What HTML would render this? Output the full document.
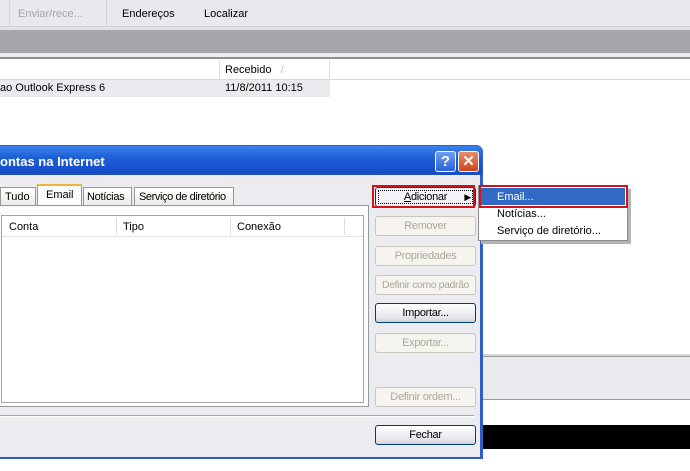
<!DOCTYPE html>
<html><head><style>
*{margin:0;padding:0;box-sizing:border-box}
body{width:690px;height:471px;position:relative;overflow:hidden;background:#fff;font-family:"Liberation Sans",Tahoma,sans-serif;font-size:11px;color:#000}
.a{position:absolute;white-space:nowrap}
.btn{position:absolute;white-space:nowrap;left:375px;width:101px;height:20px;border:1px solid #c9c7ba;border-radius:3px;background:#f5f4ef;color:#aca899;text-align:center;line-height:18px;font-size:11px;letter-spacing:-0.3px}
.btn.on{border:1px solid #003c74;background:linear-gradient(#fff,#e4e3ea 80%,#cfcfd8);color:#000}
</style></head><body>
<div class="a" style="left:0;top:0;width:690px;height:26px;background:#e9e8ec"></div>
<div class="a" style="left:9px;top:0;width:1px;height:26px;background:#d4d3d8"></div>
<div class="a" style="left:106px;top:0;width:1px;height:26px;background:#d4d3d8"></div>
<div class="a" style="left:18px;top:8px;color:#a6a6a6">Enviar/rece...</div>
<div class="a" style="left:122px;top:8px">Endereços</div>
<div class="a" style="left:204px;top:8px">Localizar</div>
<div class="a" style="left:0;top:26px;width:690px;height:4px;background:#e2e1e6;border-top:1px solid #cfced3"></div>
<div class="a" style="left:0;top:30px;width:690px;height:23px;background:#a7a6ab"></div>
<div class="a" style="left:0;top:53px;width:690px;height:5px;background:#ecebef"></div>
<div class="a" style="left:0;top:57px;width:690px;height:2px;background:#8f8e93"></div>
<div class="a" style="left:0;top:79px;width:690px;height:1px;background:#d8d8d8"></div>
<div class="a" style="left:219px;top:60px;width:1px;height:19px;background:#ddd"></div>
<div class="a" style="left:329px;top:60px;width:1px;height:19px;background:#ddd"></div>
<div class="a" style="left:225px;top:64px">Recebido &nbsp;&nbsp;<span style="color:#bbb">/</span></div>
<div class="a" style="left:0;top:80px;width:330px;height:17px;background:#ebeaee"></div>
<div class="a" style="left:0;top:82px">ao Outlook Express 6</div>
<div class="a" style="left:225px;top:82px">11/8/2011 10:15</div>
<div class="a" style="left:480px;top:354px;width:210px;height:2px;background:#d6d5da"></div>
<div class="a" style="left:480px;top:356px;width:210px;height:44px;background:#ebeaee;border-top:1px solid #9a999e;border-bottom:1px solid #9a999e"></div>
<div class="a" style="left:480px;top:425px;width:210px;height:24px;background:#000"></div>
<div class="a" style="left:0;top:145px;width:483px;height:314px;background:#2f5fc6;border-radius:0 7px 0 0"></div>
<div class="a" style="left:0;top:146px;width:482px;height:29px;background:linear-gradient(#3a82ee,#1f5fd6 40%,#1550cc 80%,#1a4fba);border-radius:0 6px 0 0"></div>
<div class="a" style="left:0;top:154px;color:#fff;font-weight:bold;font-size:13px">ontas na Internet</div>
<div class="a" style="left:435px;top:151px;width:21px;height:21px;border:1px solid #fff;border-radius:3px;background:linear-gradient(#6e9df5,#2b62db);color:#fff;font-weight:bold;font-size:15px;text-align:center;line-height:19px">?</div>
<div class="a" style="left:458px;top:151px;width:21px;height:21px;border:1px solid #fff;border-radius:3px;background:linear-gradient(#e98c6d,#c9471e);color:#fff;font-weight:bold;font-size:15px;text-align:center;line-height:19px">✕</div>
<div class="a" style="left:0;top:175px;width:480px;height:282px;background:#ecebef"></div>
<div class="a" style="left:0;top:187px;width:36px;height:18px;border:1px solid #919b9c;border-bottom:none;background:linear-gradient(#fff,#ecebe6);padding:3px 0 0 4px">Tudo</div>
<div class="a" style="left:37px;top:184px;width:45px;height:22px;border:1px solid #919b9c;border-top:2px solid #f2b33a;border-bottom:none;background:#fcfcfe;padding:3px 0 0 8px">Email</div>
<div class="a" style="left:83px;top:187px;width:49px;height:18px;border:1px solid #919b9c;border-bottom:none;background:linear-gradient(#fff,#ecebe6);padding:3px 0 0 3px;letter-spacing:-0.3px">Notícias</div>
<div class="a" style="left:134px;top:187px;width:100px;height:18px;border:1px solid #919b9c;border-bottom:none;background:linear-gradient(#fff,#ecebe6);padding:3px 0 0 4px;letter-spacing:-0.4px">Serviço de diretório</div>
<div class="a" style="left:0;top:205px;width:369px;height:202px;border:1px solid #919b9c;border-left:none;background:#fcfcfe"></div>
<div class="a" style="left:1px;top:215px;width:363px;height:188px;border:1px solid #a5a5a5;background:#fff"></div>
<div class="a" style="left:2px;top:216px;width:361px;height:21px;border-bottom:1px solid #e3e2e8"></div>
<div class="a" style="left:116px;top:218px;width:1px;height:17px;background:#dcdbe0"></div>
<div class="a" style="left:230px;top:218px;width:1px;height:17px;background:#dcdbe0"></div>
<div class="a" style="left:344px;top:218px;width:1px;height:17px;background:#dcdbe0"></div>
<div class="a" style="left:9px;top:221px">Conta</div>
<div class="a" style="left:123px;top:221px">Tipo</div>
<div class="a" style="left:237px;top:221px">Conexão</div>
<div class="a" style="left:0;top:415px;width:474px;height:1px;background:#aca899"></div>
<div class="a" style="left:0;top:416px;width:474px;height:1px;background:#fff"></div>
<div class="btn on" style="top:187px;background:#f3f2f6;line-height:19px"><span style="text-decoration:underline">A</span>dicionar<span style="position:absolute;right:4px;font-size:9px">▶</span></div>
<div class="a" style="left:378px;top:190px;width:95px;height:14px;border:1px dotted #000"></div>
<div class="a" style="left:372px;top:185px;width:103px;height:23px;border:2px solid #d2131a"></div>
<div class="btn" style="top:216px;line-height:19px">Remover</div>
<div class="btn" style="top:246px;line-height:19px">Propriedades</div>
<div class="btn" style="top:275px;line-height:19px;font-size:10.5px;letter-spacing:-0.4px">Definir como padrão</div>
<div class="btn on" style="top:303px;line-height:19px">Importar...</div>
<div class="btn" style="top:333px;line-height:19px">Exportar...</div>
<div class="btn" style="top:387px;line-height:19px">Definir ordem...</div>
<div class="btn on" style="top:425px;line-height:19px">Fechar</div>
<div class="a" style="left:481px;top:189px;width:150px;height:55px;background:#b5b4b8"></div>
<div class="a" style="left:478px;top:185px;width:150px;height:56px;background:#fff;border:1px solid #8a8a8a"></div>
<div class="a" style="left:481px;top:188px;width:144px;height:17px;background:#316ac5"></div>
<div class="a" style="left:479px;top:185px;width:149px;height:23px;border:2px solid #d2131a"></div>
<div class="a" style="left:497px;top:191px;color:#fff">Email...</div>
<div class="a" style="left:497px;top:208px">Notícias...</div>
<div class="a" style="left:497px;top:225px">Serviço de diretório...</div>
</body></html>
